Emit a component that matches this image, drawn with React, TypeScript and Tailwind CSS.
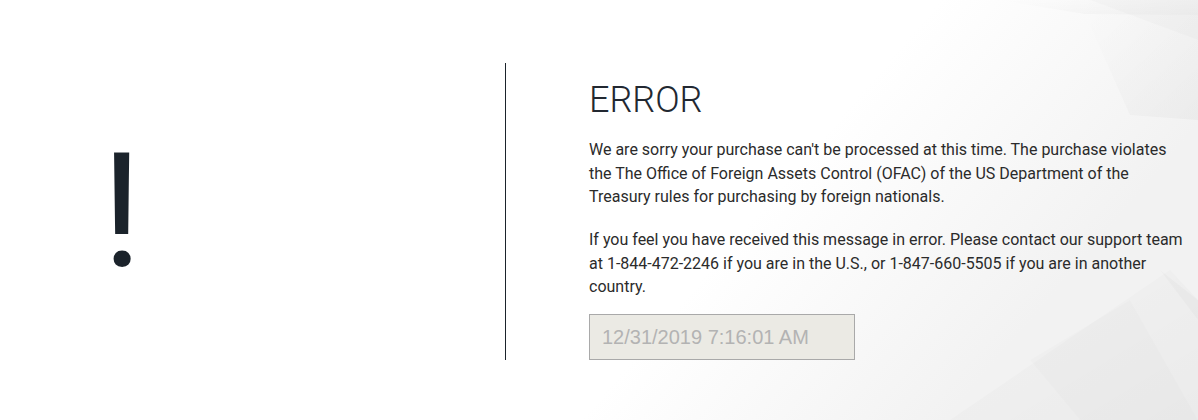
import React from 'react';

// Faint faceted backdrop on the right edge
const Backdrop: React.FC = () => (
  <svg
    className="absolute inset-0 h-full w-full pointer-events-none"
    viewBox="0 0 1198 420"
    preserveAspectRatio="none"
  >
    <defs>
      <linearGradient id="sheen" x1="0" y1="0" x2="1" y2="0.3">
        <stop offset="0.72" stopColor="#ffffff" />
        <stop offset="1" stopColor="#f2f2f2" />
      </linearGradient>
      <linearGradient id="facet" x1="0" y1="0" x2="1" y2="1">
        <stop offset="0" stopColor="#000000" stopOpacity="0" />
        <stop offset="1" stopColor="#000000" stopOpacity="0.03" />
      </linearGradient>
    </defs>
    <rect width="1198" height="420" fill="url(#sheen)" />
    <polygon points="1000,0 1198,0 1198,15 1085,14" fill="url(#facet)" />
    <polygon points="1085,14 1198,15 1198,120 1130,115" fill="url(#facet)" />
    <polygon points="1090,0 1198,0 1198,40" fill="#000000" fillOpacity="0.015" />
    <polygon points="950,420 1170,270 1198,300 1198,420" fill="url(#facet)" />
    <polygon points="1160,270 1198,300 1198,320" fill="#000000" fillOpacity="0.02" />
    <polygon points="1030,360 1130,300 1198,420 1080,420" fill="#000000" fillOpacity="0.012" />
  </svg>
);

export default function App() {
  return (
    <div className="relative h-[420px] w-full overflow-hidden bg-white font-['Roboto',sans-serif]">
      <Backdrop />
      <div className="relative flex pt-[63px]">
        {/* Icon column */}
        <div className="flex w-[505px] h-[297px] items-center pl-[101px]">
          <span className="text-[160px] leading-none font-normal text-[#1b232b]">!</span>
        </div>

        {/* Message column */}
        <div className="h-[297px] border-l border-[#1b232b] pl-[83px] pt-[16px] text-[#2b2b2b]">
          <h1 className="text-[36px] font-light leading-[42px] text-[#222831]">ERROR</h1>
          <p className="mt-[17px] w-[600px] text-[16px] leading-[23.5px]">
            We are sorry your purchase can't be processed at this time. The purchase violates the The
            Office of Foreign Assets Control (OFAC) of the US Department of the Treasury rules for
            purchasing by foreign nationals.
          </p>
          <p className="mt-[19.5px] w-[600px] text-[16px] leading-[23.5px]">
            If you feel you have received this message in error. Please contact our support team at
            1-844-472-2246 if you are in the U.S., or 1-847-660-5505 if you are in another country.
          </p>
          <input
            readOnly
            disabled
            value="12/31/2019 7:16:01 AM"
            className="mt-[15.5px] h-[46px] w-[266px] border border-[#a9a9a9] bg-[#ebeae4] px-[12px] font-['Liberation_Sans',Arial,sans-serif] text-[20px] text-[#b3b3b3]"
          />
        </div>
      </div>
    </div>
  );
}
